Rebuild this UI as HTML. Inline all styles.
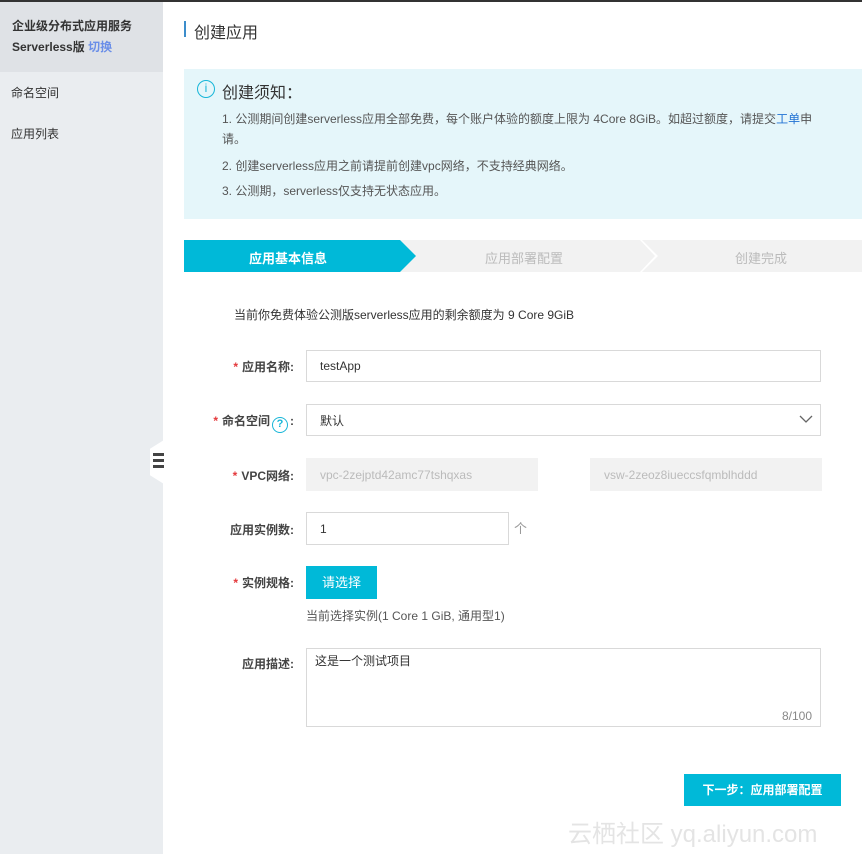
<!DOCTYPE html>
<html><head><meta charset="utf-8"><style>
*{margin:0;padding:0;box-sizing:border-box}
body{width:862px;height:854px;position:relative;overflow:hidden;background:#fff;font-family:"Liberation Sans","Noto Sans CJK SC",sans-serif;color:#333;font-size:12px}
.a{position:absolute;white-space:nowrap}
.lab{position:absolute;right:568px;font-size:12px;color:#444;font-weight:bold;text-align:right}
.star{color:#e4393c;margin-right:4px}
.inp{position:absolute;border:1px solid #d9d9d9;background:#fff;font-size:12px;color:#333;padding-left:13px;display:flex;align-items:center}
</style></head><body>
<div class="a" style="left:0;top:0;width:862px;height:2px;background:#333"></div>
<div class="a" style="left:0;top:2px;width:163px;height:852px;background:#eaedf0"></div>
<div class="a" style="left:0;top:2px;width:163px;height:70px;background:#dfe2e6"></div>
<div class="a" style="left:12px;top:17px;font-size:12px;font-weight:bold;color:#333">企业级分布式应用服务</div>
<div class="a" style="left:12px;top:38px;font-size:12px;font-weight:bold;color:#333">Serverless版 <span style="color:#6b8fe8">切换</span></div>
<div class="a" style="left:11px;top:84px;font-size:12px;color:#333">命名空间</div>
<div class="a" style="left:11px;top:125px;font-size:12px;color:#333">应用列表</div>
<div class="a" style="left:150px;top:440px;width:14px;height:44px;background:#fff;clip-path:polygon(100% 0,100% 100%,0 80%,0 20%)"></div>
<div class="a" style="left:153px;top:453px;width:11px;height:3px;background:#444"></div>
<div class="a" style="left:153px;top:459px;width:11px;height:3px;background:#444"></div>
<div class="a" style="left:153px;top:465px;width:11px;height:3px;background:#444"></div>

<div class="a" style="left:184px;top:21px;width:2px;height:16px;background:#3c8dcb"></div>
<div class="a" style="left:194px;top:19px;font-size:16px;color:#333">创建应用</div>

<div class="a" style="left:184px;top:69px;width:678px;height:150px;background:#e5f6fa"></div>
<div class="a" style="left:197px;top:80px;width:18px;height:18px;border:1.5px solid #17b6d8;border-radius:50%;color:#17b6d8;font-size:12px;text-align:center;line-height:15px">i</div>
<div class="a" style="left:222px;top:79px;font-size:16px;color:#333">创建须知：</div>
<div class="a" style="left:222px;top:110px;font-size:12px;color:#555">1. 公测期间创建serverless应用全部免费，每个账户体验的额度上限为 4Core 8GiB。如超过额度，请提交<span style="color:#2273d4">工单</span>申</div>
<div class="a" style="left:222px;top:130px;font-size:12px;color:#555">请。</div>
<div class="a" style="left:222px;top:157px;font-size:12px;color:#555">2. 创建serverless应用之前请提前创建vpc网络，不支持经典网络。</div>
<div class="a" style="left:222px;top:182px;font-size:12px;color:#555">3. 公测期，serverless仅支持无状态应用。</div>

<div class="a" style="left:184px;top:240px;width:678px;height:32px;background:#f2f2f2"></div>
<div class="a" style="left:640px;top:240px;width:18px;height:32px;background:#fff;clip-path:polygon(0 0,2px 0,18px 50%,2px 100%,0 100%,15px 50%)"></div>
<div class="a" style="left:184px;top:240px;width:232px;height:32px;background:#00b9d8;clip-path:polygon(0 0,216px 0,232px 50%,216px 100%,0 100%)"></div>
<div class="a" style="left:249px;top:248px;font-size:13px;color:#fff;font-weight:bold">应用基本信息</div>
<div class="a" style="left:485px;top:248px;font-size:13px;color:#bbb">应用部署配置</div>
<div class="a" style="left:735px;top:248px;font-size:13px;color:#bbb">创建完成</div>

<div class="a" style="left:234px;top:306px;font-size:12px;color:#333">当前你免费体验公测版serverless应用的剩余额度为 9 Core 9GiB</div>

<div class="lab" style="top:358px"><span class="star">*</span>应用名称:</div>
<div class="inp" style="left:306px;top:350px;width:515px;height:32px">testApp</div>

<div class="lab" style="top:412px"><span class="star">*</span>命名空间<span style="display:inline-block;width:16px;height:16px;border:1.5px solid #17b6d8;border-radius:50%;color:#17b6d8;font-size:11px;line-height:13px;text-align:center;vertical-align:-2px;margin:0 2px">?</span>:</div>
<div class="inp" style="left:306px;top:404px;width:515px;height:32px">默认</div>
<svg class="a" style="left:799px;top:414px" width="14" height="10"><path d="M1 2 L7 8 L13 2" fill="none" stroke="#666" stroke-width="1.3"/></svg>

<div class="lab" style="top:467px"><span class="star">*</span>VPC网络:</div>
<div class="inp" style="left:306px;top:458px;width:232px;height:33px;background:#f2f2f2;border-color:#f2f2f2;color:#bbb">vpc-2zejptd42amc77tshqxas</div>
<div class="inp" style="left:590px;top:458px;width:232px;height:33px;background:#f2f2f2;border-color:#f2f2f2;color:#bbb">vsw-2zeoz8iueccsfqmblhddd</div>

<div class="lab" style="top:521px">应用实例数:</div>
<div class="inp" style="left:306px;top:512px;width:203px;height:33px">1</div>
<div class="a" style="left:514px;top:518px;font-size:13px;color:#999">个</div>

<div class="lab" style="top:574px"><span class="star">*</span>实例规格:</div>
<div class="a" style="left:306px;top:566px;width:71px;height:33px;background:#00b9d8;color:#fff;font-size:13px;text-align:center;line-height:33px">请选择</div>
<div class="a" style="left:306px;top:607px;font-size:12px;color:#555">当前选择实例(1 Core 1 GiB, 通用型1)</div>

<div class="lab" style="top:655px">应用描述:</div>
<div class="a" style="left:306px;top:648px;width:515px;height:79px;border:1px solid #d9d9d9"></div>
<div class="a" style="left:315px;top:652px;font-size:12px;color:#333">这是一个测试项目</div>
<div class="a" style="left:782px;top:709px;font-size:12px;color:#888">8/100</div>

<div class="a" style="left:684px;top:774px;width:157px;height:32px;background:#00b9d8;color:#fff;font-size:12px;font-weight:bold;text-align:center;line-height:32px">下一步：应用部署配置</div>
<div class="a" style="left:568px;top:814px;font-size:24px;color:rgba(210,210,210,0.6)">云栖社区 yq.aliyun.com</div>
</body></html>
